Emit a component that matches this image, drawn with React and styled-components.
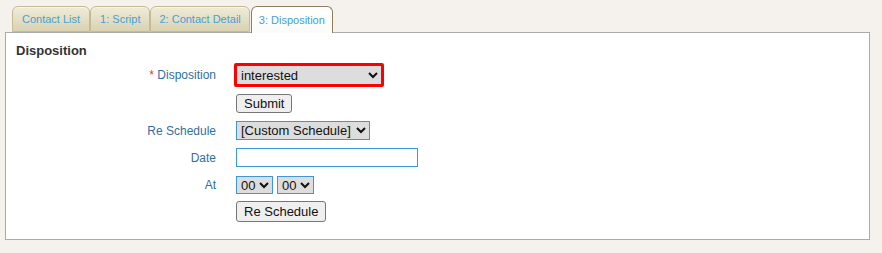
import React from "react";
import styled, { createGlobalStyle } from "styled-components";

const Global = createGlobalStyle`
  html, body { margin: 0; padding: 0; background: #f5f2ed; }
  body { font-family: "Liberation Sans", Arial, sans-serif; }
`;

const Page = styled.div`
  padding-top: 6px;
`;

const Tabs = styled.ul`
  display: flex;
  list-style: none;
  margin: 0 0 0 12px;
  padding: 0;
  position: relative;
  z-index: 1;
`;

const Tab = styled.li`
  box-sizing: border-box;
  height: ${(p) => (p.$active ? "27px" : "26px")};
  margin-bottom: ${(p) => (p.$active ? "-1px" : "0")};
  padding: 0 ${(p) => p.$pad || "9px"};
  display: flex;
  align-items: center;
  font-size: 11px;
  color: #46a0d6;
  border: 1px solid ${(p) => (p.$active ? "#8f7f60" : "#c6bb92")};
  border-bottom: ${(p) => (p.$active ? "none" : "1px solid #c6bb92")};
  border-radius: 6px 6px 0 0;
  background: ${(p) =>
    p.$active
      ? "linear-gradient(#ffffff, #fbfbf9)"
      : "linear-gradient(#efebd9, #d9d3b2)"};
  box-shadow: ${(p) => (p.$active ? "none" : "inset 0 1px 0 #f7f4e8")};
  margin-right: ${(p) => p.$gap || "1px"};
`;

const Panel = styled.div`
  margin: 0 12px 0 5px;
  border: 1px solid #aaaaaa;
  background: #ffffff;
  padding: 9px 10px 14px 10px;
`;

const Heading = styled.h3`
  margin: 0;
  font-size: 13px;
  line-height: 18px;
  font-weight: bold;
  color: #333333;
`;

const Form = styled.div`
  display: grid;
  grid-template-columns: 200px auto;
  grid-template-rows: 30px repeat(5, 27px);
  column-gap: 20px;
  align-items: center;
`;

const Label = styled.label`
  text-align: right;
  font-size: 12px;
  color: #2f6f9f;
`;

const Req = styled.span`
  color: #e8382c;
`;

const Field = styled.div`
  display: flex;
  gap: 4px;
  align-items: center;
  grid-column: 2;
`;

const Select = styled.select`
  box-sizing: border-box;
  font-family: "Liberation Sans", Arial, sans-serif;
  font-size: 13px;
  color: #111;
  background: #dddddd;
  border: ${(p) => (p.$error ? "3px solid #ff0000" : "1px solid #3b9ad6")};
  border-radius: ${(p) => (p.$error ? "2px" : "0")};
  width: ${(p) => p.$w};
  height: ${(p) => p.$h};
  margin-left: ${(p) => (p.$error ? "-2px" : "0")};
  padding: 0;
  outline: none;
`;

const TextInput = styled.input`
  box-sizing: border-box;
  width: 182px;
  height: 19px;
  border: 1px solid #3b9ad6;
  background: #fff;
  padding: 0 2px;
  font-size: 13px;
  outline: none;
`;

const Button = styled.button`
  box-sizing: border-box;
  font-family: "Liberation Sans", Arial, sans-serif;
  font-size: 13px;
  color: #111;
  background: #efefef;
  border: 1px solid #767676;
  border-radius: 3px;
  padding: 1px 7px;
  height: ${(p) => p.$h || "20px"};
  line-height: 15px;
`;

export default function App() {
  return (
    <Page>
      <Global />
      <Tabs>
        <Tab $gap="0">Contact List</Tab>
        <Tab $gap="0">1: Script</Tab>
        <Tab $pad="8px">2: Contact Detail</Tab>
        <Tab $active $pad="7px">3: Disposition</Tab>
      </Tabs>
      <Panel>
        <Heading>Disposition</Heading>
        <Form>
          <Label>
            <Req>*</Req> Disposition
          </Label>
          <Field>
            <Select $error $w="150px" $h="24px" defaultValue="interested">
              <option value="interested">interested</option>
              <option value="not">not interested</option>
            </Select>
          </Field>
          <Field>
            <Button $h="19px">Submit</Button>
          </Field>
          <Label>Re Schedule</Label>
          <Field>
            <Select $w="134px" $h="19px">
              <option>[Custom Schedule]</option>
            </Select>
          </Field>
          <Label>Date</Label>
          <Field>
            <TextInput type="text" />
          </Field>
          <Label>At</Label>
          <Field>
            <Select $w="37px" $h="18px">
              <option>00</option>
            </Select>
            <Select $w="37px" $h="18px">
              <option>00</option>
            </Select>
          </Field>
          <Field>
            <Button $h="21px">Re Schedule</Button>
          </Field>
        </Form>
      </Panel>
    </Page>
  );
}
